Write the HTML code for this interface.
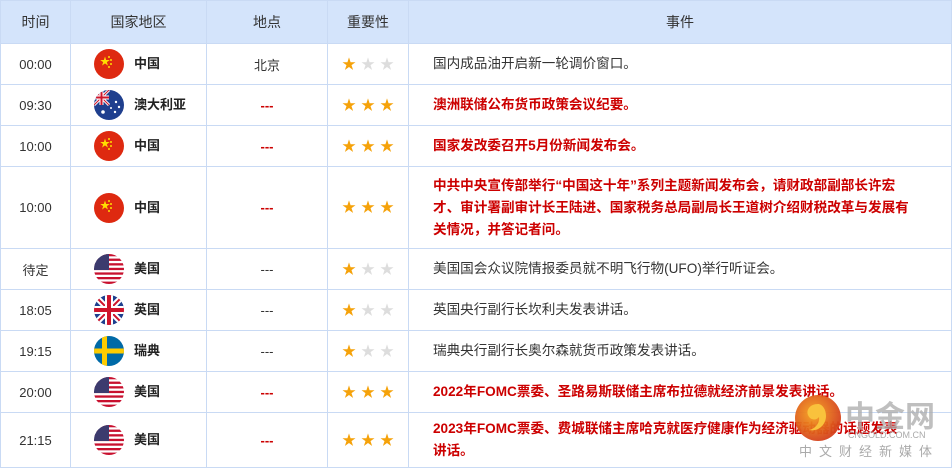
<!DOCTYPE html>
<html><head><meta charset="utf-8"><style>
*{margin:0;padding:0;box-sizing:border-box}
body{width:952px;height:469px;background:#fff;font-family:"Liberation Sans","Noto Sans CJK SC",sans-serif;font-size:13px;color:#333;position:relative;overflow:hidden}
table{border-collapse:collapse;position:absolute;left:0;top:0;width:952px;table-layout:fixed}
td,th{border:1px solid #c9daf4;text-align:center;vertical-align:middle}
th{background:#d4e4fb;height:43px;font-weight:normal;font-size:14px;color:#333}
td{height:41px}
.c{display:flex;align-items:center;padding-left:23px;font-weight:bold;color:#222;height:30px;line-height:30px}
.c svg{margin-right:10px;flex:none;display:block}
.e{text-align:left;padding-left:24px;padding-right:34px;line-height:22px;font-size:13.6px}
.r{color:#c00;font-weight:bold}
.d{color:#c00;font-weight:bold}
.s{font-size:14px;letter-spacing:5px;padding-left:5px;color:#f5a20a;line-height:14px;padding-bottom:1px}
.s i{font-style:normal;color:#ddd}
.wm{position:absolute;left:0;top:0}
</style></head><body>
<svg width="0" height="0" style="position:absolute">
<defs>
<clipPath id="cc"><circle cx="15" cy="15" r="15"/></clipPath>
<g id="cn"><rect width="30" height="30" fill="#de2910"/><text x="6" y="16" font-size="10" fill="#ffde00">★</text><circle cx="15" cy="8" r="1" fill="#ffde00"/><circle cx="17" cy="11" r="1" fill="#ffde00"/><circle cx="17" cy="15" r="1" fill="#ffde00"/><circle cx="15" cy="18" r="1" fill="#ffde00"/></g>
<g id="uj"><rect width="30" height="30" fill="#1f3f8e"/><path d="M0 0L30 30M30 0L0 30" stroke="#fff" stroke-width="6"/><path d="M0 0L30 30M30 0L0 30" stroke="#cf142b" stroke-width="2"/><path d="M15 0V30M0 15H30" stroke="#fff" stroke-width="8"/><path d="M15 0V30M0 15H30" stroke="#cf142b" stroke-width="4"/></g>
<g id="us"><rect width="30" height="30" fill="#fff"/><g fill="#c8102e"><rect y="0" width="30" height="2.3"/><rect y="4.6" width="30" height="2.3"/><rect y="9.2" width="30" height="2.3"/><rect y="13.8" width="30" height="2.3"/><rect y="18.4" width="30" height="2.3"/><rect y="23" width="30" height="2.3"/><rect y="27.6" width="30" height="2.4"/></g><rect width="15" height="16" fill="#3c3b6e"/></g>
</defs></svg>
<table>
<colgroup><col style="width:70px"><col style="width:136px"><col style="width:121px"><col style="width:81px"><col></colgroup>
<tr><th>时间</th><th>国家地区</th><th>地点</th><th>重要性</th><th>事件</th></tr>
<tr><td>00:00</td><td><div class="c"><svg width="30" height="30"><g clip-path="url(#cc)"><use href="#cn"/></g></svg>中国</div></td><td>北京</td><td class="s">★<i>★★</i></td><td class="e">国内成品油开启新一轮调价窗口。</td></tr>
<tr><td>09:30</td><td><div class="c"><svg width="30" height="30"><g clip-path="url(#cc)"><rect width="30" height="30" fill="#1f3f8e"/><g transform="scale(0.5)"><use href="#uj"/></g><g fill="#fff"><circle cx="22" cy="12" r="1.2"/><circle cx="25" cy="17" r="1.2"/><circle cx="21" cy="22" r="1.2"/><circle cx="17" cy="18" r="1"/><circle cx="9" cy="22" r="1.8"/></g></g></svg>澳大利亚</div></td><td class="d">---</td><td class="s">★★★</td><td class="e r">澳洲联储公布货币政策会议纪要。</td></tr>
<tr><td>10:00</td><td><div class="c"><svg width="30" height="30"><g clip-path="url(#cc)"><use href="#cn"/></g></svg>中国</div></td><td class="d">---</td><td class="s">★★★</td><td class="e r">国家发改委召开5月份新闻发布会。</td></tr>
<tr><td style="height:82px">10:00</td><td><div class="c"><svg width="30" height="30"><g clip-path="url(#cc)"><use href="#cn"/></g></svg>中国</div></td><td class="d">---</td><td class="s">★★★</td><td class="e r">中共中央宣传部举行“中国这十年”系列主题新闻发布会，请财政部副部长许宏才、审计署副审计长王陆进、国家税务总局副局长王道树介绍财税改革与发展有关情况，并答记者问。</td></tr>
<tr><td>待定</td><td><div class="c"><svg width="30" height="30"><g clip-path="url(#cc)"><use href="#us"/></g></svg>美国</div></td><td>---</td><td class="s">★<i>★★</i></td><td class="e">美国国会众议院情报委员就不明飞行物(UFO)举行听证会。</td></tr>
<tr><td>18:05</td><td><div class="c"><svg width="30" height="30"><g clip-path="url(#cc)"><use href="#uj"/></g></svg>英国</div></td><td>---</td><td class="s">★<i>★★</i></td><td class="e">英国央行副行长坎利夫发表讲话。</td></tr>
<tr><td>19:15</td><td><div class="c"><svg width="30" height="30"><g clip-path="url(#cc)"><rect width="30" height="30" fill="#006aa7"/><rect x="8" width="5" height="30" fill="#fecc00"/><rect y="12.5" width="30" height="5" fill="#fecc00"/></g></svg>瑞典</div></td><td>---</td><td class="s">★<i>★★</i></td><td class="e">瑞典央行副行长奥尔森就货币政策发表讲话。</td></tr>
<tr><td>20:00</td><td><div class="c"><svg width="30" height="30"><g clip-path="url(#cc)"><use href="#us"/></g></svg>美国</div></td><td class="d">---</td><td class="s">★★★</td><td class="e r">2022年FOMC票委、圣路易斯联储主席布拉德就经济前景发表讲话。</td></tr>
<tr><td style="height:55px">21:15</td><td><div class="c"><svg width="30" height="30"><g clip-path="url(#cc)"><use href="#us"/></g></svg>美国</div></td><td class="d">---</td><td class="s">★★★</td><td class="e r" style="padding-right:50px">2023年FOMC票委、费城联储主席哈克就医疗健康作为经济驱动器的话题发表讲话。</td></tr>
</table>
<div class="wm">
<svg width="952" height="469" style="position:absolute;left:0;top:0">
<defs><radialGradient id="lg" cx="0.4" cy="0.4" r="0.7"><stop offset="0" stop-color="#f6a21c"/><stop offset="1" stop-color="#d0341c"/></radialGradient></defs>
<circle cx="818" cy="418" r="23" fill="url(#lg)" opacity="0.95"/>
<path d="M818 404c-8 0-12 6-10 11s8 6 11 2c1 6-4 12-10 13 9 2 17-5 17-14 0-7-4-12-8-12z" fill="#f9c23c"/>
<text x="845" y="427" font-size="30" font-weight="bold" fill="#aaa" fill-opacity="0.75" font-family="Noto Sans CJK SC,sans-serif">中金网</text>
<text x="848" y="438" font-size="9" fill="#aaa" font-family="Liberation Sans,sans-serif">CNGOLD.COM.CN</text>
<text x="799" y="456" font-size="13" fill="#aaa" letter-spacing="7" font-family="Noto Sans CJK SC,sans-serif">中文财经新媒体</text>
</svg></div>
</body></html>
